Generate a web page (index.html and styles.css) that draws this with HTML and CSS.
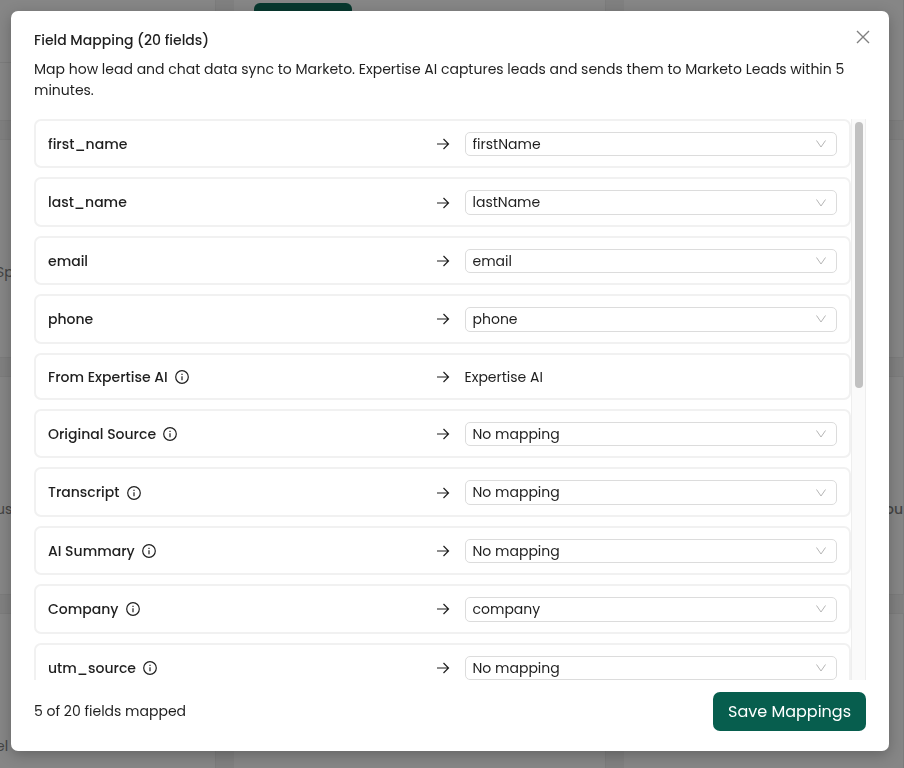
FILE: index.html
```html
<!DOCTYPE html>
<html lang="en">
<head>
  <meta charset="UTF-8" />
  <meta name="viewport" content="width=device-width, initial-scale=1.0" />
  <title>Field Mapping</title>
  <link rel="stylesheet" href="styles.css">
</head>
<body>
  <svg class="sprite" aria-hidden="true">
    <symbol id="icon-arrow" viewBox="0 0 14 14"><path d="M1 7h11.5M7.5 2l5 5-5 5" /></symbol>
    <symbol id="icon-info" viewBox="0 0 14 14"><circle cx="7" cy="7" r="6.3" /><path d="M7 6.2v4M7 3.8v1.2" /></symbol>
  </svg>

  <div class="page" aria-hidden="true">
    <div class="card head"><span class="divider"></span></div>
    <div class="card head"><span class="page-button"></span></div>
    <div class="card head"></div>
    <div class="card"><span>Sp</span></div>
    <div class="card"></div>
    <div class="card"></div>
    <div class="card"><span>us</span></div>
    <div class="card"></div>
    <div class="card end"><span>you</span></div>
    <div class="card"><span>el</span></div>
    <div class="card"></div>
    <div class="card"></div>
  </div>

  <div class="overlay">
    <div class="modal" role="dialog" aria-labelledby="title">
      <header class="modal-header">
        <div>
          <h1 id="title">Field Mapping (20 fields)</h1>
          <p>Map how lead and chat data sync to Marketo. Expertise AI captures leads and sends them to Marketo Leads within 5 minutes.</p>
        </div>
        <button type="button" class="close" aria-label="Close">
          <svg viewBox="0 0 14 14"><path d="M1 1l12 12M13 1L1 13" /></svg>
        </button>
      </header>

      <div class="scroll-area">
        <div class="rows">
          <div class="row">
            <label for="f1">first_name</label>
            <svg class="arrow"><use href="#icon-arrow" /></svg>
            <select id="f1"><option>firstName</option></select>
          </div>
          <div class="row">
            <label for="f2">last_name</label>
            <svg class="arrow"><use href="#icon-arrow" /></svg>
            <select id="f2"><option>lastName</option></select>
          </div>
          <div class="row">
            <label for="f3">email</label>
            <svg class="arrow"><use href="#icon-arrow" /></svg>
            <select id="f3"><option>email</option></select>
          </div>
          <div class="row">
            <label for="f4">phone</label>
            <svg class="arrow"><use href="#icon-arrow" /></svg>
            <select id="f4"><option>phone</option></select>
          </div>
          <div class="row">
            <span class="label">From Expertise AI <svg class="info"><use href="#icon-info" /></svg></span>
            <svg class="arrow"><use href="#icon-arrow" /></svg>
            <span>Expertise AI</span>
          </div>
          <div class="row">
            <label for="f6">Original Source <svg class="info"><use href="#icon-info" /></svg></label>
            <svg class="arrow"><use href="#icon-arrow" /></svg>
            <select id="f6"><option>No mapping</option></select>
          </div>
          <div class="row">
            <label for="f7">Transcript <svg class="info"><use href="#icon-info" /></svg></label>
            <svg class="arrow"><use href="#icon-arrow" /></svg>
            <select id="f7"><option>No mapping</option></select>
          </div>
          <div class="row">
            <label for="f8">AI Summary <svg class="info"><use href="#icon-info" /></svg></label>
            <svg class="arrow"><use href="#icon-arrow" /></svg>
            <select id="f8"><option>No mapping</option></select>
          </div>
          <div class="row">
            <label for="f9">Company <svg class="info"><use href="#icon-info" /></svg></label>
            <svg class="arrow"><use href="#icon-arrow" /></svg>
            <select id="f9"><option>company</option></select>
          </div>
          <div class="row">
            <label for="f10">utm_source <svg class="info"><use href="#icon-info" /></svg></label>
            <svg class="arrow"><use href="#icon-arrow" /></svg>
            <select id="f10"><option>No mapping</option></select>
          </div>
        </div>
        <div class="track"><div class="thumb"></div></div>
      </div>

      <footer class="modal-footer">
        <span>5 of 20 fields mapped</span>
        <button type="button" class="save">Save Mappings</button>
      </footer>
    </div>
  </div>
</body>
</html>
```

FILE: styles.css
```css
* { box-sizing: border-box; }
body { margin: 0; height: 100vh; overflow: hidden; background: #808080; color: #1f1f1f; font-family: "Poppins", "Inter", sans-serif; font-size: 14px; line-height: 1.5; }
svg { fill: none; stroke: currentColor; stroke-width: 1.2; }
.sprite { display: none; }

/* dimmed page behind the dialog */
.page { height: 100vh; overflow: hidden; display: grid; grid-template-columns: 216px 372px 1fr; grid-template-rows: 121px 219px 219px 219px; gap: 18px; color: #444; }
.card { background: #868686; border: 1px solid #7c7c7c; border-width: 1px 1px 1px 0; display: flex; align-items: center; overflow: hidden; padding-top: 48px; }
.card span { margin-left: -4px; }
.card.head { align-items: flex-start; padding: 3px 0; border-top: none; }
.card.end { justify-content: flex-end; font-weight: 500; }
.card .divider { width: 100%; height: 60px; margin: 0; border-bottom: 1px solid #7c7c7c; }
.card .page-button { width: 98px; height: 36px; margin-left: 20px; border-radius: 6px; background: #07382e; }

.overlay { position: fixed; inset: 0; padding: 11px 15px 17px 11px; }
.modal { height: 100%; display: flex; flex-direction: column; padding: 19px 23px 20px; background: white; border-radius: 7px; box-shadow: 0 4px 14px rgba(0,0,0,0.25); }
.modal-header { display: flex; justify-content: space-between; }
.modal-header p { margin: 8px 0 18px; }
h1 { margin: 0; font-size: 14px; font-weight: 500; }
.close { flex: none; width: 14px; height: 14px; margin-right: -4px; padding: 0; border: none; background: none; color: #808080; }
.close svg { display: block; width: 14px; height: 14px; stroke-width: 1.4; }

.scroll-area { flex: 1; min-height: 0; display: flex; }
.rows { flex: 1; overflow: hidden; display: flex; flex-direction: column; gap: 9px; line-height: 1.6; }
.row { flex: none; display: grid; grid-template-columns: 1fr 14px 1fr; align-items: center; gap: 15px; padding: 11px 12px 10px; border: 2px solid #f1f1f1; border-radius: 7px; }
label, .label { display: flex; align-items: center; gap: 7px; font-weight: 500; }
.info { width: 14px; height: 14px; }
.arrow { width: 14px; height: 14px; }
select { appearance: none; width: 100%; padding: 0 7px; border: 1px solid #dcdcdc; border-radius: 5px; color: inherit; font: inherit; background: white url("data:image/svg+xml,%3Csvg xmlns='http://www.w3.org/2000/svg' viewBox='0 0 10 8' fill='none' stroke='%23b5b5b5'%3E%3Cpath d='M.5.5 5 7 9.5.5'/%3E%3C/svg%3E") no-repeat right 10px center / 10px 8px; }
.track { width: 15px; padding: 3px 2px 3px 3px; background: #fafafa; border: 1px solid #eee; border-width: 0 1px; }
.thumb { width: 8px; height: 48%; border-radius: 4px; background: #c1c1c1; }

.modal-footer { display: flex; justify-content: space-between; align-items: center; padding-top: 12px; }
.save { height: 39px; padding: 0 15px; border: none; border-radius: 7px; background: #075e4e; color: white; font-family: inherit; font-size: 16px; }
```
